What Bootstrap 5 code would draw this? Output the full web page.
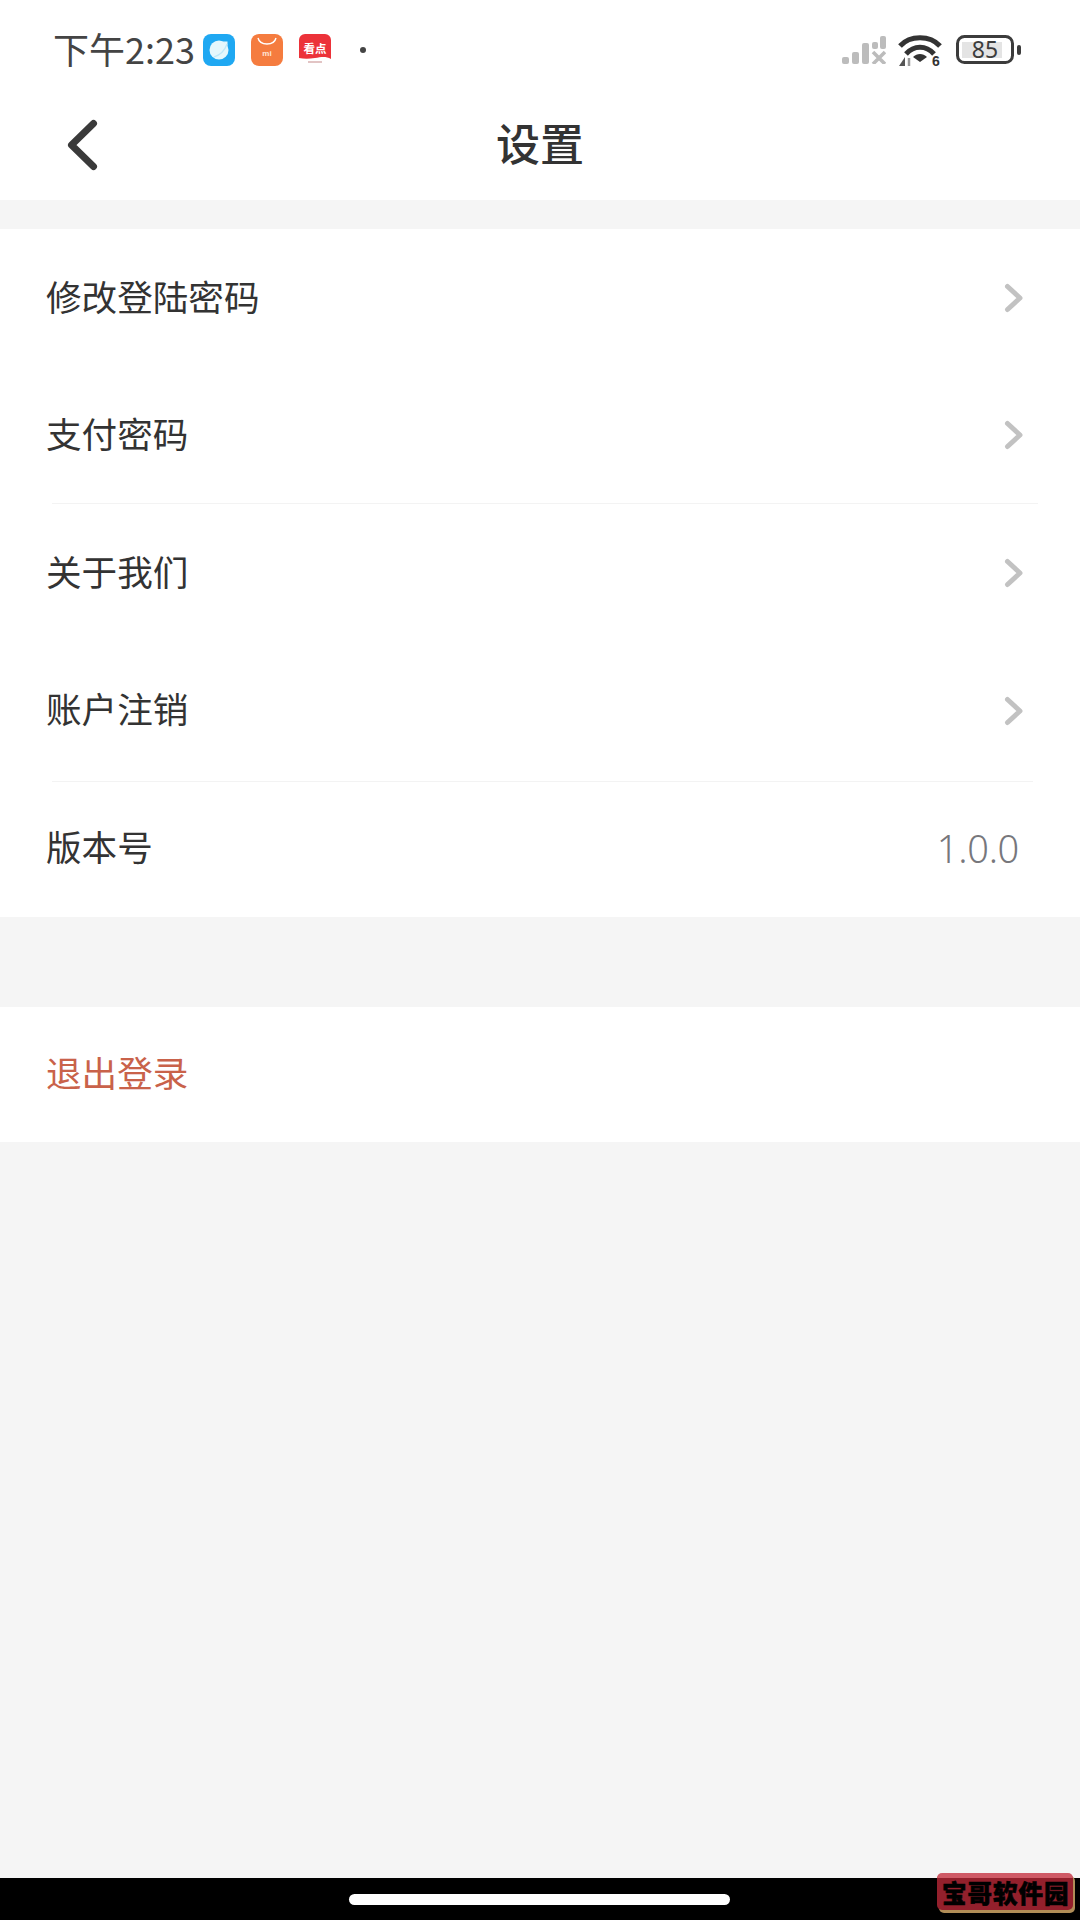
<!DOCTYPE html>
<html lang="zh-CN">
<head>
    <meta charset="UTF-8">
    <title>设置</title>
    <link href="https://cdn.jsdelivr.net/npm/bootstrap@5.3.0/dist/css/bootstrap.min.css" rel="stylesheet">
    <style>
        html, body { height: 100%; }
        body {
            width: 1080px; height: 1920px; overflow: hidden;
            background: #f5f5f5; color: #333;
            font-family: "Noto Sans CJK SC", "Noto Sans", sans-serif;
        }
        .phone-screen { height: 1920px; }
        .status-strip { height: 100px; padding: 0 58px 0 53px; background: #fff; }
        .clock { font-size: 36px; line-height: 1; color: #444; width: 141px; white-space: nowrap; padding-bottom: 4px; }
        .app-icons { gap: 16px; margin-left: 9px; }
        .tray-icons { gap: 12px; }
        .batt-icon { margin-left: 2px; }
        .dot-mark { width: 6px; height: 6px; border-radius: 50%; background: #444; margin-left: 29px; }
        .title-bar { height: 100px; background: #fff; }
        .title-bar h1 { font-size: 44px; font-weight: 500; color: #333; margin: 0 0 17px; line-height: 1; }
        .back-btn { left: 64px; top: 18px; }
        .settings-list { margin-top: 29px; background: #fff; }
        .setting-row { height: 137.6px; padding: 0 56px 0 46px; font-size: 35.6px; color: #333; }
        .row-label { padding-bottom: 5px; }
        .row-rule { border-bottom: 1px solid #f3f3f3; margin: -1px 42px 0 52px; }
        .row-rule.lower-rule { margin: 2px 47px -3px 52px; }
        .ver-text { font-size: 38px; color: #77777c; font-family: "Noto Sans", sans-serif; font-weight: 300; letter-spacing: -.3px; margin-right: 5px; }
        .logout-block { margin-top: 90px; height: 135px; background: #fff; padding-left: 46px; font-size: 35.6px; color: #c9624a; }
        .nav-strip { height: 42px; background: #000; }
        .home-pill { width: 381px; height: 11px; background: #fff; border-radius: 6px; margin: 16px 2px 0 0; }
        .site-stamp {
            right: 7px; bottom: 10px; width: 136px; height: 37px; padding-left: 5px;
            background: #93202c; border-top: 5px solid #cf5a66; border-radius: 5px;
            box-shadow: 2px 3px 0 #b08d57;
            font-weight: 900; font-size: 24.5px; line-height: 29px; letter-spacing: 1px;
            color: #000; -webkit-text-stroke: .6px #000; white-space: nowrap;
        }
    </style>
</head>
<body>
    <div class="phone-screen d-flex flex-column position-relative">
        <div class="status-strip d-flex align-items-center justify-content-between">
            <div class="d-flex align-items-center">
                <span class="clock">下午2:23</span>
                <div class="app-icons d-flex align-items-center">
                    <svg width="32" height="32" viewBox="0 0 32 32">
                        <rect width="32" height="32" rx="8" fill="#1fa8f2"/>
                        <circle cx="16" cy="16" r="9.500" fill="#e6f7fc"/>
                        <path d="M20 7.500l4.500 0 0 4.500z" fill="#e6f7fc"/>
                        <path d="M11 23C17 21 22 16 24 10" stroke="#bfe8f8" stroke-width="1.200" fill="none"/>
                    </svg>
                    <svg width="32" height="32" viewBox="0 0 32 32">
                        <rect width="32" height="32" rx="8" fill="#f57c3f"/>
                        <path d="M7 4C9 12 23 12 25 4" stroke="#fff" stroke-width="1.400" fill="none"/>
                        <text x="16" y="22" text-anchor="middle" font-size="8" font-weight="700" fill="#ffe6d8" font-family="Liberation Sans, sans-serif">mi</text>
                    </svg>
                    <svg width="32" height="32" viewBox="0 0 32 32">
                        <path d="M0 6a6 6 0 0 1 6-6h20a6 6 0 0 1 6 6v19c-5-3-10-2-16-1s-11 1-16 0z" fill="#ec3239"/>
                        <text x="16" y="19" text-anchor="middle" font-size="11.500" font-weight="700" fill="#fff" font-family="Noto Sans CJK SC, sans-serif">看点</text>
                        <path d="M9 28h14" stroke="#d9b0b0" stroke-width="1.500"/>
                    </svg>
                </div>
                <span class="dot-mark"></span>
            </div>
            <div class="tray-icons d-flex align-items-center">
                <svg width="44" height="28" viewBox="0 0 44 28">
                    <g fill="#bcbcbc">
                        <rect x="0" y="21" width="7" height="7" rx="2"/>
                        <rect x="10" y="16" width="7" height="12" rx="2"/>
                        <rect x="20" y="7" width="7" height="21" rx="2"/>
                        <rect x="30" y="6" width="6" height="7" rx="2"/>
                        <rect x="38" y="0" width="6" height="13" rx="2"/>
                    </g>
                    <path d="M31 16l12 12M43 16L31 28" stroke="#bcbcbc" stroke-width="3.600"/>
                </svg>
                <svg width="44" height="38" viewBox="0 -3 44 38">
                    <g fill="none" stroke="#333">
                        <path d="M2 12C12 1 32 1 42 12" stroke-width="5"/>
                        <path d="M8 20C16 11 28 11 36 20" stroke-width="5"/>
                    </g>
                    <path d="M15 23C19 19 25 19 29 23L22 28z" fill="#333"/>
                    <path d="M7 23v9H1z" fill="#555"/>
                    <path d="M11 24v8" stroke="#999" stroke-width="2.500"/>
                    <text x="34" y="32" font-size="14" font-weight="700" fill="#333" font-family="Liberation Sans, sans-serif">6</text>
                </svg>
                <svg class="batt-icon" width="66" height="36" viewBox="0 -3 66 36">
                    <rect x="1.500" y="1.500" width="55" height="26" rx="7" fill="#fff" stroke="#3c3c3c" stroke-width="3"/>
                    <rect x="6" y="7" width="40" height="16" fill="#e4e4e4"/>
                    <rect x="61" y="10" width="4" height="10" rx="2" fill="#3c3c3c"/>
                    <text x="29" y="23" text-anchor="middle" font-size="23" fill="#3c3c3c" font-family="Noto Sans, sans-serif">85</text>
                </svg>
            </div>
        </div>

        <div class="title-bar position-relative d-flex align-items-center justify-content-center">
            <svg class="back-btn position-absolute" width="36" height="54" viewBox="0 0 36 54">
                <path d="M29.500 5.500L7.500 27l22 21.500" fill="none" stroke="#3a3a3a" stroke-width="7" stroke-linecap="round" stroke-linejoin="round"/>
            </svg>
            <h1>设置</h1>
        </div>

        <div class="settings-list">
            <div class="setting-row d-flex align-items-center justify-content-between">
                <span class="row-label">修改登陆密码</span>
                <svg width="20" height="30" viewBox="0 0 20 30"><path d="M3.500 3.500L16 15 3.500 26.500" fill="none" stroke="#c2c2c2" stroke-width="5" stroke-linecap="round" stroke-linejoin="round"/></svg>
            </div>
            <div class="setting-row d-flex align-items-center justify-content-between">
                <span class="row-label">支付密码</span>
                <svg width="20" height="30" viewBox="0 0 20 30"><path d="M3.500 3.500L16 15 3.500 26.500" fill="none" stroke="#c2c2c2" stroke-width="5" stroke-linecap="round" stroke-linejoin="round"/></svg>
            </div>
            <div class="row-rule"></div>
            <div class="setting-row d-flex align-items-center justify-content-between">
                <span class="row-label">关于我们</span>
                <svg width="20" height="30" viewBox="0 0 20 30"><path d="M3.500 3.500L16 15 3.500 26.500" fill="none" stroke="#c2c2c2" stroke-width="5" stroke-linecap="round" stroke-linejoin="round"/></svg>
            </div>
            <div class="setting-row d-flex align-items-center justify-content-between">
                <span class="row-label">账户注销</span>
                <svg width="20" height="30" viewBox="0 0 20 30"><path d="M3.500 3.500L16 15 3.500 26.500" fill="none" stroke="#c2c2c2" stroke-width="5" stroke-linecap="round" stroke-linejoin="round"/></svg>
            </div>
            <div class="row-rule lower-rule"></div>
            <div class="setting-row d-flex align-items-center justify-content-between">
                <span class="row-label">版本号</span>
                <span class="ver-text">1.0.0</span>
            </div>
        </div>

        <div class="logout-block d-flex align-items-center"><span class="row-label">退出登录</span></div>

        <div class="flex-grow-1"></div>
        <div class="nav-strip d-flex justify-content-center">
            <div class="home-pill"></div>
        </div>
        <div class="site-stamp position-absolute">宝哥软件园</div>
    </div>
    <script src="https://cdn.jsdelivr.net/npm/bootstrap@5.3.0/dist/js/bootstrap.bundle.min.js"></script>
</body>
</html>
